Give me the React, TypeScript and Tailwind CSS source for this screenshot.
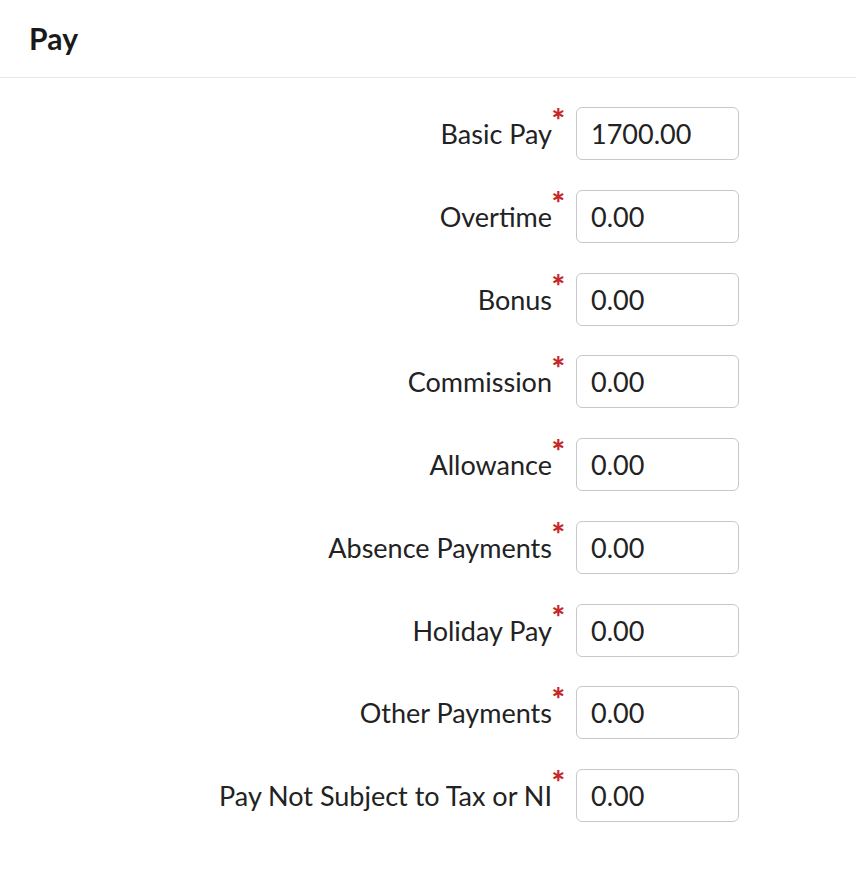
import React from "react";

const rows: [string, string][] = [
  ["Basic Pay", "1700.00"],
  ["Overtime", "0.00"],
  ["Bonus", "0.00"],
  ["Commission", "0.00"],
  ["Allowance", "0.00"],
  ["Absence Payments", "0.00"],
  ["Holiday Pay", "0.00"],
  ["Other Payments", "0.00"],
  ["Pay Not Subject to Tax or NI", "0.00"],
];

export default function App() {
  return (
    <div className="w-[856px] h-[876px] bg-white text-[#1f1f1f] font-['Lato','Noto_Sans',sans-serif] overflow-hidden">
      <div className="h-[78px] border-b border-[#e6e6e6] flex items-center pl-[29px]">
        <h2 className="text-[30px] font-bold text-[#1a1a1a] tracking-[0.2px]">Pay</h2>
      </div>
      <div className="flex flex-col gap-[29.75px] pt-[29px] pr-[117px]">
        {rows.map(([label, value]) => (
          <div key={label} className="flex items-center justify-end">
            <label className="relative text-[27px] text-[#222] leading-none mr-[24px]">
              {label}
              <span className="absolute -right-[13px] -top-[16px] text-[32px] font-black text-[#c62828] leading-none">*</span>
            </label>
            <input
              readOnly
              value={value}
              className="w-[163px] h-[53px] rounded-[6px] border border-[#c8c8cc] pl-[14px] pr-[10px] text-[27px] text-[#222] outline-none bg-white"
            />
          </div>
        ))}
      </div>
    </div>
  );
}
